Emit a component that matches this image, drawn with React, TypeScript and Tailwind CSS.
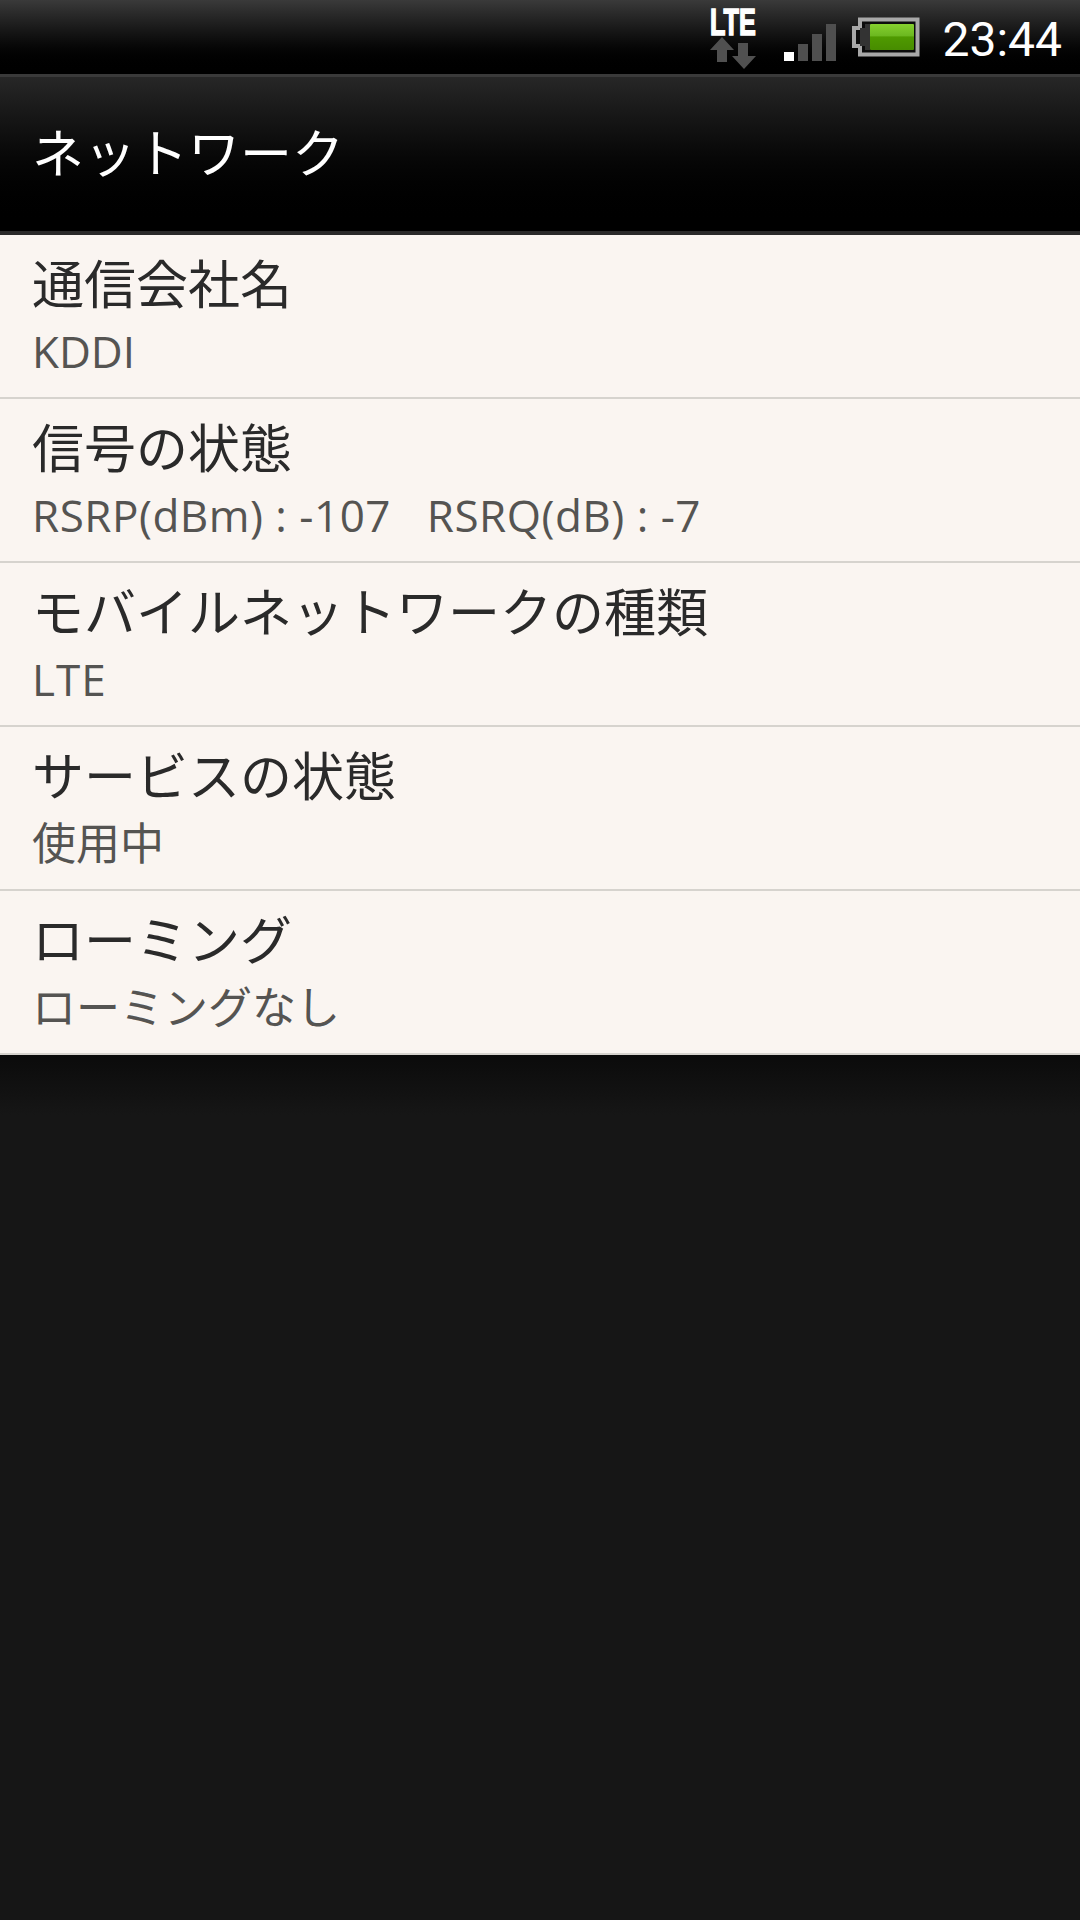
import React from 'react';

const ROWS = [
  { title: '通信会社名', value: 'KDDI', valueClass: '' },
  { title: '信号の状態', value: 'RSRP(dBm) : -107\u00a0\u00a0\u00a0RSRQ(dB) : -7', valueClass: 'tracking-[0.5px]' },
  { title: 'モバイルネットワークの種類', value: 'LTE', valueClass: 'tracking-[1px]' },
  { title: 'サービスの状態', value: '使用中', valueClass: '' },
  { title: 'ローミング', value: 'ローミングなし', valueClass: '' },
];

function LteIcon() {
  return (
    <div className="relative w-[50px] h-[68px]">
      <span className="absolute left-[1px] top-[4px] text-[36px] leading-[36px] font-bold text-white font-['Liberation_Sans',sans-serif] [-webkit-text-stroke:1.5px_#fff] origin-top-left scale-x-[0.7]">LTE</span>
      <svg width="50" height="68" viewBox="0 -6 50 68" className="block">
        <path d="M13 30 L25 43 H18 V55 H8 V43 H1 Z" fill="#505050" />
        <path d="M29 36 H39 V49 H47 L35 62 L23 49 H29 Z" fill="#505050" />
      </svg>
    </div>
  );
}

function SignalIcon() {
  return (
    <svg width="52" height="38" viewBox="0 0 52 38" className="block">
      <rect x="0" y="28" width="10" height="9" fill="#fff" />
      <rect x="14" y="20" width="10" height="17" fill="#4f4f4f" />
      <rect x="28" y="10" width="10" height="27" fill="#4f4f4f" />
      <rect x="42" y="0" width="10" height="37" fill="#4f4f4f" />
    </svg>
  );
}

function BatteryIcon() {
  return (
    <svg width="68" height="40" viewBox="0 0 68 40" className="block">
      <defs>
        <linearGradient id="fill" x1="0" y1="0" x2="0" y2="1">
          <stop offset="0" stopColor="#86d02f" />
          <stop offset="0.45" stopColor="#6cb820" />
          <stop offset="0.5" stopColor="#4f9a00" />
          <stop offset="1" stopColor="#478c00" />
        </linearGradient>
      </defs>
      <path d="M8 2.5 H65.5 V37.5 H8 V29 H2 V11 H8 Z" fill="#0c0c0c" stroke="#a8a8a8" strokeWidth="4" />
      <path d="M8 11 H13 V7 H18 V33 H13 V29 H8 Z" fill="#333" />
      <rect x="18" y="7" width="44" height="26" rx="1" fill="url(#fill)" />
    </svg>
  );
}

function Row({ title, value, valueClass }: { title: string; value: string; valueClass: string }) {
  return (
    <div className="h-[164px] bg-[#faf5f1] pl-[32px] border-b-2 border-[#d6d3ce]">
      <div className="pt-[14px] text-[52px] leading-[70px] text-[#2a2a2a]">{title}</div>
      <div className={`text-[44px] leading-[58px] mt-[3px] text-[#555452] ${valueClass}`}>{value}</div>
    </div>
  );
}

export default function App() {
  return (
    <div className="w-[1080px] h-[1920px] overflow-hidden flex flex-col bg-[#161616] font-['Open_Sans','Noto_Sans_CJK_JP',sans-serif]">
      <div className="h-[74px] flex items-center justify-end pr-[18px] bg-gradient-to-b from-[#3a3a3a] to-[#000000]">
        <div className="mr-[25px] -mt-[4px]"><LteIcon /></div>
        <div className="mr-[16px] mt-[12px]"><SignalIcon /></div>
        <div className="mr-[22px]"><BatteryIcon /></div>
        <span className="text-[48px] leading-none mt-[5px] text-white font-['Roboto',sans-serif] font-normal">23:44</span>
      </div>
      <div className="h-[3px] bg-[#3a3a3a]" />
      <div className="h-[154px] flex items-start pl-[32px] pt-[41px] bg-gradient-to-b from-[#272727] to-[#000000]">
        <span className="text-[52px] leading-[70px] text-white">ネットワーク</span>
      </div>
      <div className="h-[4px] bg-[#2a2a2a]" />
      <div>
        {ROWS.map((row) => (
          <Row key={row.title} title={row.title} value={row.value} valueClass={row.valueClass} />
        ))}
      </div>
      <div className="h-[60px] bg-gradient-to-b from-[#0b0b0b] to-[#161616]" />
    </div>
  );
}
